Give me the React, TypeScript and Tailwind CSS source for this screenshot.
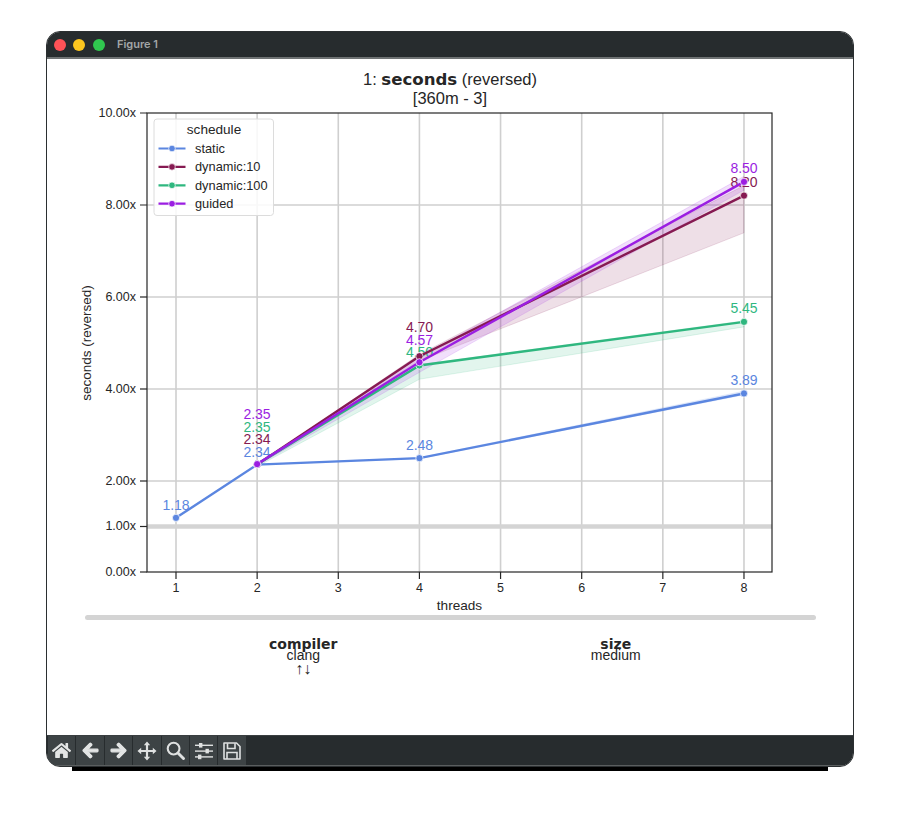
import { FaArrowLeft, FaArrowRight, FaHome } from "react-icons/fa";

const xAt = (t: number) => 176 + (t - 1) * 81.14;
const yAt = (v: number) => 572 - v * 45.9;

interface Band {
  threads: number;
  low: number;
  high: number;
}

interface Series {
  name: string;
  color: string;
  points: [number, number][];
  band: Band[];
}

const series: Series[] = [
  {
    name: "static",
    color: "#5b86e0",
    points: [
      [1, 1.18],
      [2, 2.34],
      [4, 2.48],
      [8, 3.89],
    ],
    band: [
      { threads: 2, low: 2.34, high: 2.34 },
      { threads: 4, low: 2.47, high: 2.49 },
      { threads: 8, low: 3.86, high: 3.94 },
    ],
  },
  {
    name: "dynamic:10",
    color: "#861a52",
    points: [
      [2, 2.34],
      [4, 4.7],
      [8, 8.2],
    ],
    band: [
      { threads: 2, low: 2.34, high: 2.34 },
      { threads: 4, low: 4.6, high: 4.74 },
      { threads: 8, low: 7.39, high: 8.42 },
    ],
  },
  {
    name: "dynamic:100",
    color: "#2fb77f",
    points: [
      [2, 2.35],
      [4, 4.5],
      [8, 5.45],
    ],
    band: [
      { threads: 2, low: 2.3, high: 2.35 },
      { threads: 4, low: 4.2, high: 4.52 },
      { threads: 8, low: 5.34, high: 5.47 },
    ],
  },
  {
    name: "guided",
    color: "#9b1ee2",
    points: [
      [2, 2.35],
      [4, 4.57],
      [8, 8.5],
    ],
    band: [
      { threads: 2, low: 2.32, high: 2.36 },
      { threads: 4, low: 4.35, high: 4.68 },
      { threads: 8, low: 8.32, high: 8.62 },
    ],
  },
];

const labels = [
  { text: "1.18", x: 176, y: 510, color: "#5b86e0" },
  { text: "2.34", x: 257, y: 456.5, color: "#5b86e0" },
  { text: "2.34", x: 257, y: 444, color: "#861a52" },
  { text: "2.35", x: 257, y: 431.5, color: "#2fb77f" },
  { text: "2.35", x: 257, y: 419, color: "#9b1ee2" },
  { text: "2.48", x: 419.5, y: 449.5, color: "#5b86e0" },
  { text: "4.50", x: 419.5, y: 356.5, color: "#2fb77f" },
  { text: "4.57", x: 419.5, y: 344.5, color: "#9b1ee2" },
  { text: "4.70", x: 419.5, y: 332, color: "#861a52" },
  { text: "3.89", x: 744, y: 385, color: "#5b86e0" },
  { text: "5.45", x: 744, y: 313, color: "#2fb77f" },
  { text: "8.20", x: 744, y: 187, color: "#861a52" },
  { text: "8.50", x: 744, y: 173, color: "#9b1ee2" },
];

const yTicks = [
  { label: "10.00x", y: 113 },
  { label: "8.00x", y: 205 },
  { label: "6.00x", y: 297 },
  { label: "4.00x", y: 389 },
  { label: "2.00x", y: 481 },
  { label: "1.00x", y: 526.5 },
  { label: "0.00x", y: 572 },
];

const threads = [1, 2, 3, 4, 5, 6, 7, 8];

function bandPath(band: Band[]) {
  const top = band.map((b) => `${xAt(b.threads)},${yAt(b.high)}`);
  const bottom = [...band].reverse().map((b) => `${xAt(b.threads)},${yAt(b.low)}`);
  return [...top, ...bottom].join(" ");
}

function Plot() {
  return (
    <svg
      viewBox="47 100 806 512"
      className="block h-[512px] w-[806px] font-['Liberation_Sans',sans-serif]"
    >
      {threads.map((t) => (
        <line key={t} x1={xAt(t)} x2={xAt(t)} y1={113} y2={572} stroke="#cfcfcf" strokeWidth={1.6} />
      ))}
      {yTicks.slice(1, 5).map((t) => (
        <line key={t.label} x1={147} x2={772} y1={t.y} y2={t.y} stroke="#cfcfcf" strokeWidth={1.6} />
      ))}
      <line x1={147} x2={772} y1={526.5} y2={526.5} stroke="#d4d4d4" strokeWidth={4.5} />

      {series.map((s) => (
        <polygon
          key={s.name}
          points={bandPath(s.band)}
          fill={s.color}
          fillOpacity={0.14}
          stroke={s.color}
          strokeOpacity={0.14}
        />
      ))}

      {labels.map((l) => (
        <text key={l.text + l.color} x={l.x} y={l.y} textAnchor="middle" fontSize={14} fill={l.color}>
          {l.text}
        </text>
      ))}

      {series.map((s) => (
        <g key={s.name}>
          <polyline
            points={s.points.map(([t, v]) => `${xAt(t)},${yAt(v)}`).join(" ")}
            fill="none"
            stroke={s.color}
            strokeWidth={2.4}
          />
          {s.points.map(([t, v]) => (
            <circle key={t} cx={xAt(t)} cy={yAt(v)} r={3.6} fill={s.color} stroke="#fff" strokeWidth={0.7} />
          ))}
        </g>
      ))}

      <rect x={147} y={113} width={625} height={459} fill="none" stroke="#262626" strokeWidth={1.2} />

      {yTicks.map((t) => (
        <g key={t.label}>
          <line x1={140} x2={147} y1={t.y} y2={t.y} stroke="#262626" strokeWidth={1.2} />
          <text x={136} y={t.y + 3.8} textAnchor="end" fontSize={12.5} fill="#262626">
            {t.label}
          </text>
        </g>
      ))}
      {threads.map((t) => (
        <g key={t}>
          <line x1={xAt(t)} x2={xAt(t)} y1={572} y2={579} stroke="#262626" strokeWidth={1.2} />
          <text x={xAt(t)} y={591.5} textAnchor="middle" fontSize={12.5} fill="#262626">
            {t}
          </text>
        </g>
      ))}
      <text x={459.5} y={609.5} textAnchor="middle" fontSize={13.6} fill="#262626">
        threads
      </text>
      <text
        transform="translate(90.5 343) rotate(-90)"
        textAnchor="middle"
        fontSize={13.5}
        fill="#262626"
      >
        seconds (reversed)
      </text>

      <rect x={154} y={119} width={119.5} height={96.5} rx={3} fill="#fff" fillOpacity={0.85} stroke="#dcdcdc" />
      <text x={214} y={134} textAnchor="middle" fontSize={13.6} fill="#262626">
        schedule
      </text>
      {series.map((s, i) => {
        const y = 148.5 + i * 18.4;
        return (
          <g key={s.name}>
            <line x1={158.5} x2={185.5} y1={y} y2={y} stroke={s.color} strokeWidth={2.2} />
            <circle cx={172} cy={y} r={3.3} fill={s.color} stroke="#fff" strokeWidth={0.7} />
            <text x={195} y={y + 4.4} fontSize={12.8} fill="#262626">
              {s.name}
            </text>
          </g>
        );
      })}
    </svg>
  );
}

function MoveIcon() {
  return (
    <svg viewBox="0 0 20 20" className="h-5 w-5" fill="#dfe1e1">
      <path d="M10 0.5 13.2 4.2H11.1V8.9H15.8V6.8L19.5 10 15.8 13.2V11.1H11.1V15.8H13.2L10 19.5 6.8 15.8H8.9V11.1H4.2V13.2L0.5 10 4.2 6.8V8.9H8.9V4.2H6.8Z" />
    </svg>
  );
}

function ZoomIcon() {
  return (
    <svg viewBox="0 0 20 20" className="h-[19px] w-[19px]" fill="none" stroke="#dfe1e1">
      <circle cx={8} cy={8} r={6.2} strokeWidth={2.2} />
      <path d="M12.6 12.6 18.4 18.4" strokeWidth={3} strokeLinecap="round" />
    </svg>
  );
}

function SlidersIcon() {
  return (
    <svg viewBox="0 0 20 20" className="h-5 w-5" fill="#dfe1e1">
      <rect x={1} y={3.6} width={18} height={1.4} />
      <rect x={1} y={9.4} width={18} height={1.4} />
      <rect x={1} y={15.2} width={18} height={1.4} />
      <rect x={5} y={2} width={3.4} height={4.6} />
      <rect x={11.5} y={7.8} width={3.4} height={4.6} />
      <rect x={4} y={13.6} width={3.4} height={4.6} />
    </svg>
  );
}

function SaveIcon() {
  return (
    <svg viewBox="0 0 20 20" className="h-5 w-5" fill="none" stroke="#dfe1e1" strokeWidth={1.6}>
      <path d="M2 2H14.5L18 5.5V18H2Z" strokeLinejoin="round" />
      <path d="M5.5 2.2V7.5H13V2.2" />
      <path d="M5 18V11.5H15V18" />
    </svg>
  );
}

const tools = [
  <FaHome key="home" className="h-[19px] w-[19px] text-[#e3e5e5]" />,
  <FaArrowLeft key="back" stroke="currentColor" strokeWidth={40} className="h-[17px] w-[17px] text-[#e3e5e5]" />,
  <FaArrowRight key="forward" stroke="currentColor" strokeWidth={40} className="h-[17px] w-[17px] text-[#e3e5e5]" />,
  <MoveIcon key="move" />,
  <ZoomIcon key="zoom" />,
  <SlidersIcon key="sliders" />,
  <SaveIcon key="save" />,
];

export default function App() {
  return (
    <div className="min-h-[827px] bg-white pl-[46px] pt-[31px] font-['Liberation_Sans',sans-serif] text-[#262626]">
      <div className="h-[736px] w-[808px] rounded-[14px] shadow-[0_30px_0_-26px_#000]">
        <div className="flex h-full flex-col overflow-hidden rounded-[14px] border border-[#2b2f31] bg-white">
          <div className="flex h-[27px] shrink-0 items-center border-b-2 border-[#6f7374] bg-[#272c2e] pl-[7px]">
            <span className="h-3 w-3 rounded-full bg-[#ff5257]" />
            <span className="ml-[7px] h-3 w-3 rounded-full bg-[#fcc61f]" />
            <span className="ml-[7.5px] h-3 w-3 rounded-full bg-[#30c74f]" />
            <span className="ml-[12.5px] font-['Inter',sans-serif] text-[11px] font-semibold text-[#a3a6a7]">
              Figure 1
            </span>
          </div>

          <div className="flex-1">
            <div className="h-[41px] pt-[11px] text-center text-[16.5px] leading-[19px]">
              <div>
                1: <span className="font-['DejaVu_Sans',sans-serif] text-[16.6px] font-bold">seconds</span> (reversed)
              </div>
              <div>[360m - 3]</div>
            </div>
            <Plot />
            <div className="ml-[38px] mt-[3px] h-[5px] w-[731px] rounded-full bg-[#d4d4d4]" />
            <div className="ml-[100px] mt-[18px] grid w-[625px] grid-cols-2 text-center text-[14px] leading-[11px]">
              <div>
                <div className="font-['DejaVu_Sans',sans-serif] text-[14px] leading-[12px] font-bold">compiler</div>
                <div>clang</div>
                <div className="mt-[2px] text-[16px] leading-[12px]">↑↓</div>
              </div>
              <div>
                <div className="font-['DejaVu_Sans',sans-serif] text-[14px] leading-[12px] font-bold">size</div>
                <div>medium</div>
              </div>
            </div>
          </div>

          <div className="flex h-[31px] shrink-0 gap-px border-t border-b border-t-[#3a3f41] border-b-[#5a5e5f] bg-[#272c2e] pl-px">
            {tools.map((icon, i) => (
              <div key={i} className="flex h-full w-[27.4px] items-center justify-center bg-[#3d4345]">
                {icon}
              </div>
            ))}
          </div>
        </div>
      </div>
    </div>
  );
}
